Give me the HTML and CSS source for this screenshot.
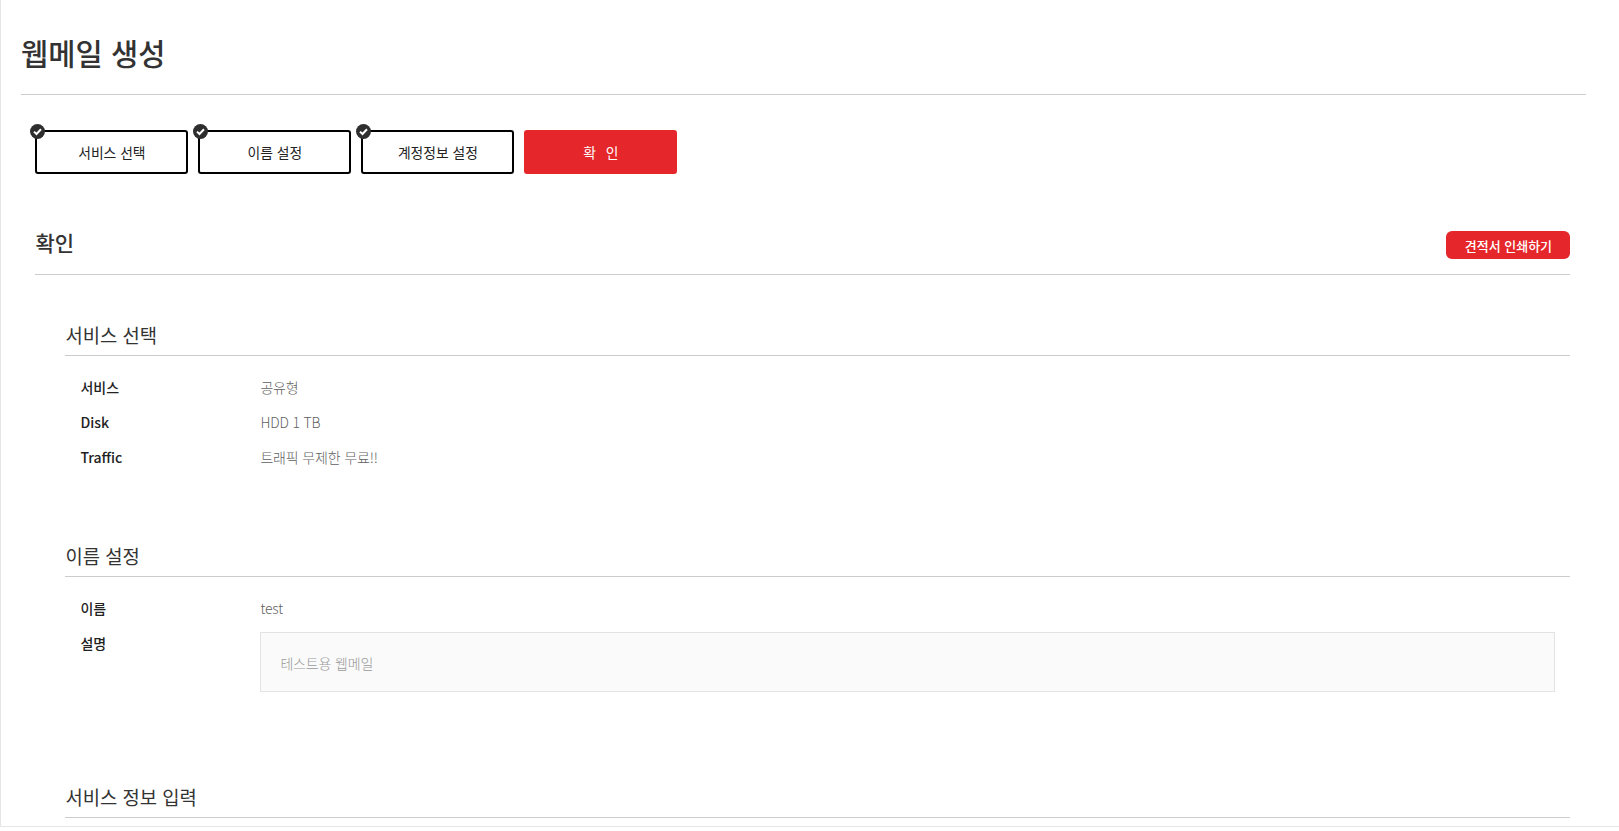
FILE: index.html
```html
<!DOCTYPE html>
<html lang="ko">
<head>
<meta charset="utf-8">
<title>웹메일 생성</title>
<link rel="stylesheet" href="styles.css">
</head>
<body>
<main class="page">
  <h1 class="page-title">웹메일 생성</h1>
  <ol class="steps">
    <li class="step done">서비스 선택<span class="badge"><svg viewBox="0 0 15 15" width="15" height="15"><circle cx="7.5" cy="7.5" r="7.5" fill="#2e2e2e"/><path d="M4 7.6l2.5 2.4L11 5.3" fill="none" stroke="#fff" stroke-width="2"/></svg></span></li>
    <li class="step done">이름 설정<span class="badge"><svg viewBox="0 0 15 15" width="15" height="15"><circle cx="7.5" cy="7.5" r="7.5" fill="#2e2e2e"/><path d="M4 7.6l2.5 2.4L11 5.3" fill="none" stroke="#fff" stroke-width="2"/></svg></span></li>
    <li class="step done">계정정보 설정<span class="badge"><svg viewBox="0 0 15 15" width="15" height="15"><circle cx="7.5" cy="7.5" r="7.5" fill="#2e2e2e"/><path d="M4 7.6l2.5 2.4L11 5.3" fill="none" stroke="#fff" stroke-width="2"/></svg></span></li>
    <li class="step current">확 인</li>
  </ol>
  <section class="confirm">
    <header class="confirm-head">
      <h2 class="confirm-title">확인</h2>
      <button class="print-btn" type="button">견적서 인쇄하기</button>
    </header>
    <div class="group">
      <h3 class="group-title">서비스 선택</h3>
      <dl class="rows">
        <div class="row"><dt>서비스</dt><dd>공유형</dd></div>
        <div class="row"><dt>Disk</dt><dd>HDD 1 TB</dd></div>
        <div class="row"><dt>Traffic</dt><dd>트래픽 무제한 무료!!</dd></div>
      </dl>
    </div>
    <div class="group group-name">
      <h3 class="group-title">이름 설정</h3>
      <dl class="rows">
        <div class="row"><dt>이름</dt><dd>test</dd></div>
        <div class="row"><dt>설명</dt><dd class="desc">테스트용 웹메일</dd></div>
      </dl>
    </div>
    <div class="group group-info">
      <h3 class="group-title">서비스 정보 입력</h3>
    </div>
  </section>
</main>
</body>
</html>
```
FILE: styles.css
```css
* { box-sizing: border-box; }
html, body { margin: 0; padding: 0; height: 831px; overflow: hidden; background: #fff; }
body { font-family: "Noto Sans CJK KR", "Noto Sans", sans-serif; color: #333; }
.page {
  height: 827px;
  padding: 0 33px 0 20px;
  border-left: 1px solid #e6e6e6;
  border-bottom: 1px solid #e6e6e6;
  overflow: hidden;
}
.page-title {
  margin: 0;
  height: 95px;
  padding-top: 31px;
  font-size: 29.6px;
  line-height: 44px;
  font-weight: 500;
  color: #333;
  border-bottom: 1px solid #ccc;
}
.steps {
  list-style: none;
  margin: 0;
  padding: 35px 0 0 14.4px;
  display: flex;
  gap: 10px;
}
.step {
  position: relative;
  width: 153px;
  height: 44px;
  display: flex;
  align-items: center;
  justify-content: center;
  font-size: 13.8px;
  font-weight: 400;
  border: 2px solid #000;
  border-radius: 3px;
  color: #222;
}
.step.current {
  background: #e5262b;
  border-color: #e5262b;
  color: #fff;
  word-spacing: 6px;
}
.badge {
  position: absolute;
  left: -7.4px;
  top: -8px;
  width: 15px;
  height: 15px;
  display: block;
  line-height: 0;
}
.confirm { padding: 0 0 0 14.4px; margin-right: 15.6px; }
.confirm-head {
  margin-top: 36px;
  height: 65px;
  display: flex;
  justify-content: space-between;
  align-items: flex-start;
  border-bottom: 1px solid #ccc;
}
.confirm-title {
  margin: 0;
  padding-top: 17px;
  font-size: 21px;
  line-height: 30px;
  font-weight: 500;
  color: #333;
}
.print-btn {
  margin-top: 21px;
  width: 124px;
  height: 28px;
  padding: 0;
  border: 0;
  border-radius: 6px;
  background: #e5262b;
  color: #fff;
  font-family: inherit;
  font-size: 13px;
  font-weight: 500;
}
.group { padding-left: 30px; padding-top: 42px; }
.group-name { padding-top: 63.5px; }
.group-info { padding-top: 87px; }
.group-title {
  margin: 0;
  height: 39px;
  font-size: 18.8px;
  line-height: 36px;
  font-weight: 400;
  color: #333;
  border-bottom: 1px solid #ccc;
}
.rows { margin: 0; padding: 13.5px 15px 0; }
.row { display: flex; min-height: 35px; font-size: 14px; line-height: 35px; }
.row dt { width: 180px; font-weight: 500; color: #222; flex: none; }
.row dd { margin: 0; flex: 1; color: #5f5f5f; font-weight: 300; letter-spacing: -0.15px; }
.row dd.desc {
  margin-top: 6.5px;
  height: 60px;
  padding: 0 19px;
  line-height: 60px;
  background: #fafafa;
  border: 1px solid #e3e3e3;
  color: #999;
}
```
